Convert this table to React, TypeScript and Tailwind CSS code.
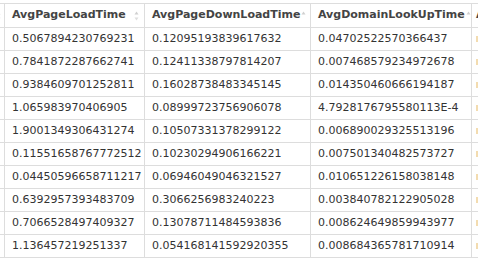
import React from 'react';

const rows: [string, string, string][] = [
  ['0.5067894230769231', '0.12095193839617632', '0.04702522570366437'],
  ['0.7841872287662741', '0.12411338797814207', '0.007468579234972678'],
  ['0.9384609701252811', '0.16028738483345145', '0.014350460666194187'],
  ['1.065983970406905', '0.08999723756906078', '4.7928176795580113E-4'],
  ['1.9001349306431274', '0.10507331378299122', '0.006890029325513196'],
  ['0.11551658767772512', '0.10230294906166221', '0.007501340482573727'],
  ['0.04450596658711217', '0.06946049046321527', '0.010651226158038148'],
  ['0.6392957393483709', '0.3066256983240223', '0.003840782122905028'],
  ['0.7066528497409327', '0.13078711484593836', '0.008624649859943977'],
  ['1.136457219251337', '0.054168141592920355', '0.008684365781710914'],
];

const widths = ['w-[140px]', 'w-[166px]', 'w-[161px]'];
const headers = ['AvgPageLoadTime', 'AvgPageDownLoadTime', 'AvgDomainLookUpTime'];

function SortIcon({ both }: { both?: boolean }) {
  return (
    <svg width="7" height="12" viewBox="0 0 7 12" className="shrink-0">
      <path d="M3.5 1.5 L5.5 4.5 H1.5 Z" fill="#d0d0d0" />
      {both && <path d="M3.5 10.5 L5.5 7.5 H1.5 Z" fill="#dedede" />}
    </svg>
  );
}

export default function App() {
  return (
    <div className="w-[478px] h-[260px] overflow-hidden bg-white pt-[3px] font-['DejaVu_Sans',sans-serif] text-[11px]">
      <div className="flex h-[25px] border-y border-[#dddddd] text-[#444444] font-bold">
        <div className="w-[5px] shrink-0 border-r border-[#dddddd] flex items-center overflow-hidden">
          <div className="-ml-[5px]"><SortIcon both /></div>
        </div>
        {headers.map((h, i) => (
          <div key={h} className={`${widths[i]} shrink-0 border-r border-[#dddddd] flex items-center justify-between pl-[7px] pr-[4px]`}>
            <span>{h}</span>
            <SortIcon both={i === 0} />
          </div>
        ))}
        <div className="flex-1 flex items-center overflow-hidden pl-[4px] text-[#444444]">A</div>
      </div>
      {rows.map((r, ri) => (
        <div key={ri} className="flex h-[23px] border-b border-[#dddddd] text-[#333333]">
          <div className="w-[5px] shrink-0 border-r border-[#dddddd]" />
          {r.map((c, ci) => (
            <div key={ci} className={`${widths[ci]} shrink-0 border-r border-[#dddddd] flex items-center pl-[7px] overflow-hidden whitespace-nowrap`}>
              {c}
            </div>
          ))}
          <div className="flex-1 flex items-center overflow-hidden pl-[4px]">
            <span className="block w-[2px] h-[6px] bg-[#f3dcb0]" />
          </div>
        </div>
      ))}
    </div>
  );
}
